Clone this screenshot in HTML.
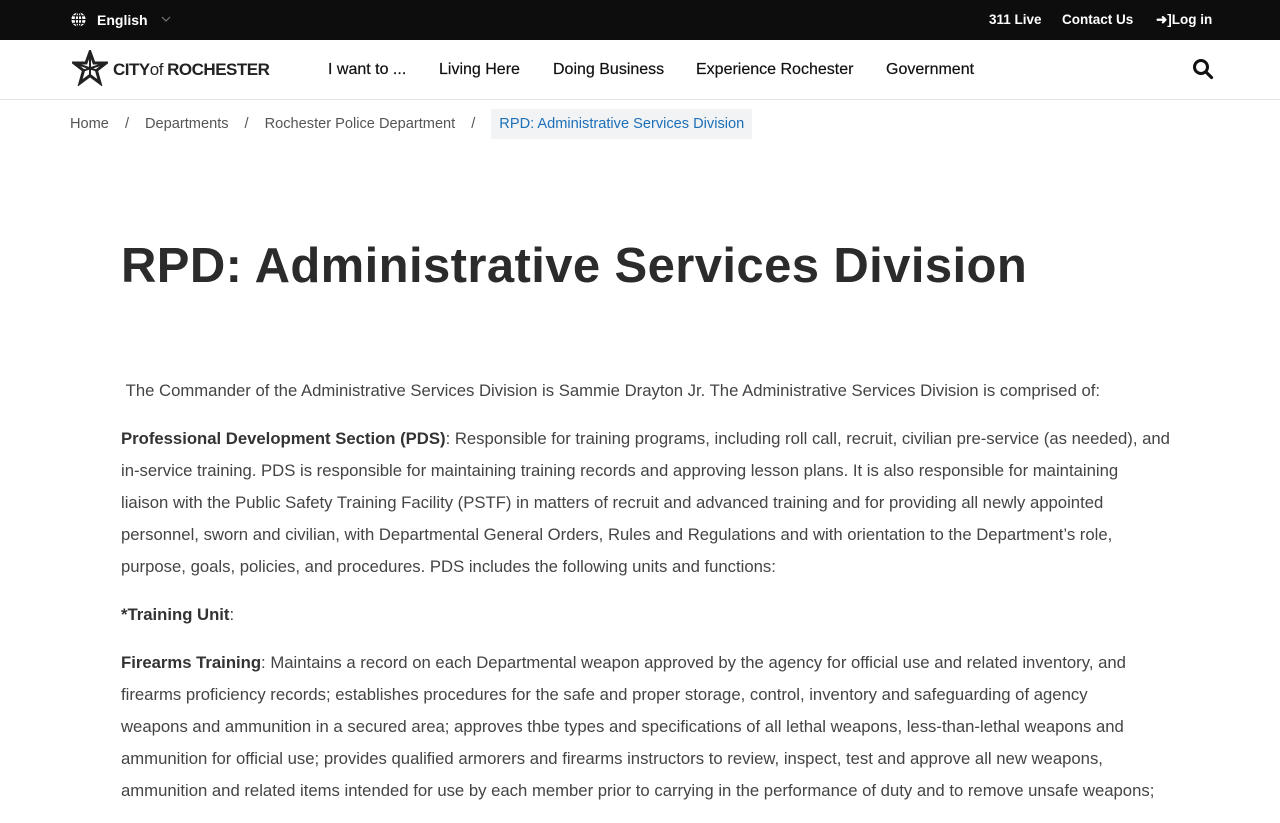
<!DOCTYPE html>
<html><head><meta charset="utf-8"><style>
*{margin:0;padding:0;box-sizing:border-box}
body{width:1280px;height:800px;overflow:hidden;font-family:"Liberation Sans",Arial,sans-serif;background:#fff;color:#333}
.top{height:40px;background:#0d0d0d;color:#fff;font-weight:bold;font-size:14px;position:relative}
.top span{position:absolute;top:12px}
.nav{height:60px;border-bottom:1px solid #e3e3e3;position:relative}
.nav .m{position:absolute;top:21px;font-size:16px;color:#111;-webkit-text-stroke:0.2px #111}
.bc{position:absolute;top:109px;left:70px;font-size:14.6px;color:#555;display:flex;align-items:center}
.bc .s{margin:0 16px}
.bc .cur{background:#f1f3f5;color:#1d6fb8;padding:7px 8px;border-radius:2px}
h1{position:absolute;top:238px;left:121px;font-size:49px;font-weight:bold;color:#2b2b2b;letter-spacing:0.4px}
.c{position:absolute;top:375px;left:121px;width:1080px;font-size:16.7px;line-height:32px;color:#444;white-space:nowrap}
.c p{margin-bottom:16px}
.c b{color:#333}
</style></head><body>
<div class="top">
<svg style="position:absolute;left:71px;top:12px" width="15" height="15" viewBox="0 0 16 16"><circle cx="8" cy="8" r="7.5" fill="#fff"/><path d="M0.5 8h15M8 .5v15M2 4h12M2 12h12" stroke="#0d0d0d" stroke-width="1.2"/><ellipse cx="8" cy="8" rx="3.5" ry="7.5" fill="none" stroke="#0d0d0d" stroke-width="1.2"/></svg>
<span style="left:97px">English</span>
<svg style="position:absolute;left:161px;top:16px" width="10" height="7" viewBox="0 0 10 7"><path d="M1 1l4 4 4-4" stroke="#777" fill="none" stroke-width="1.2"/></svg>
<span style="left:989px;font-size:13.5px">311 Live</span>
<span style="left:1062px;font-size:13.5px">Contact Us</span>
<span style="left:1156px;font-size:13.5px">&#10140;]Log in</span>
</div>
<div class="nav">
<svg style="position:absolute;left:72px;top:10px" width="36" height="36" viewBox="0 0 36 36"><path d="M18 2L22 13 34 13 24.5 20.5 28 33 18 25.5 8 33 11.5 20.5 2 13 14 13Z" fill="none" stroke="#222" stroke-width="3"/><path d="M18 2V25.5M2 13 24.5 20.5M34 13 11.5 20.5" stroke="#222" stroke-width="2"/></svg>
<div style="position:absolute;left:113px;top:20px;font-size:17px;font-weight:bold;color:#222;letter-spacing:-0.5px">CITY<span style="font-weight:normal">of</span> ROCHESTER</div>
<span class="m" style="left:328px">I want to ...</span>
<span class="m" style="left:439px">Living Here</span>
<span class="m" style="left:553px">Doing Business</span>
<span class="m" style="left:696px">Experience Rochester</span>
<span class="m" style="left:886px">Government</span>
<svg style="position:absolute;left:1192px;top:18px" width="22" height="22" viewBox="0 0 22 22"><circle cx="9" cy="9" r="6.5" fill="none" stroke="#111" stroke-width="3"/><path d="M14 14l5.5 5.5" stroke="#111" stroke-width="3.2" stroke-linecap="round"/></svg>
</div>
<div class="bc"><span>Home</span><span class="s">/</span><span>Departments</span><span class="s">/</span><span>Rochester Police Department</span><span class="s">/</span><span class="cur">RPD: Administrative Services Division</span></div>
<h1>RPD: Administrative Services Division</h1>
<div class="c">
<p>&nbsp;The Commander of the Administrative Services Division is Sammie Drayton Jr. The Administrative Services Division is comprised of:</p>
<p><b>Professional Development Section (PDS)</b>: Responsible for training programs, including roll call, recruit, civilian pre-service (as needed), and<br>in-service training. PDS is responsible for maintaining training records and approving lesson plans. It is also responsible for maintaining<br>liaison with the Public Safety Training Facility (PSTF) in matters of recruit and advanced training and for providing all newly appointed<br>personnel, sworn and civilian, with Departmental General Orders, Rules and Regulations and with orientation to the Department’s role,<br>purpose, goals, policies, and procedures. PDS includes the following units and functions:</p>
<p><b>*Training Unit</b>:</p>
<p><b>Firearms Training</b>: Maintains a record on each Departmental weapon approved by the agency for official use and related inventory, and<br>firearms proficiency records; establishes procedures for the safe and proper storage, control, inventory and safeguarding of agency<br>weapons and ammunition in a secured area; approves thbe types and specifications of all lethal weapons, less-than-lethal weapons and<br>ammunition for official use; provides qualified armorers and firearms instructors to review, inspect, test and approve all new weapons,<br>ammunition and related items intended for use by each member prior to carrying in the performance of duty and to remove unsafe weapons;</p>
</div>
</body></html>
